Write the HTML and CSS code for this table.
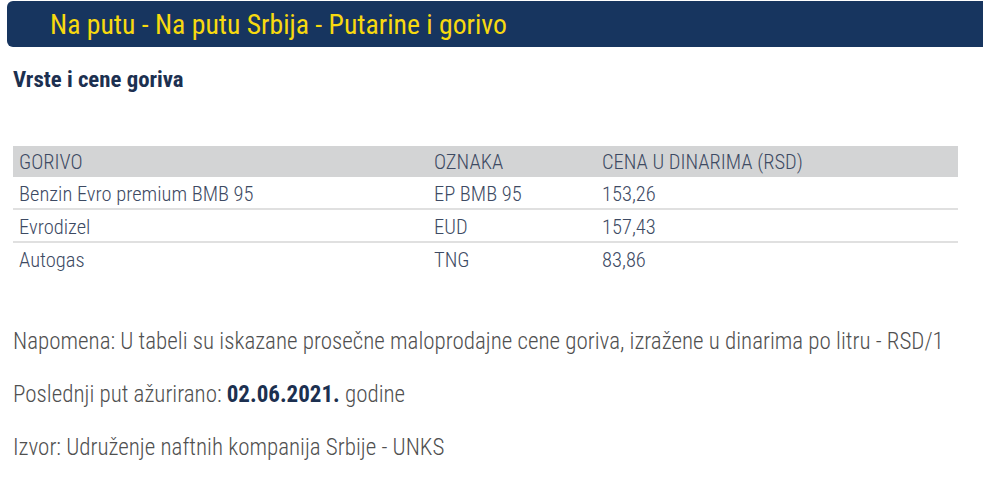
FILE: index.html
```html
<!DOCTYPE html>
<html lang="sr">
<head>
<meta charset="utf-8">
<title>Putarine i gorivo</title>
<link rel="stylesheet" href="styles.css">
</head>
<body>
<header class="banner"><h1 class="banner-title">Na putu - Na putu Srbija - Putarine i gorivo</h1></header>
<main class="content">
  <h2 class="section-title">Vrste i cene goriva</h2>
  <table class="fuel-table">
    <thead>
      <tr><th class="col-fuel">GORIVO</th><th class="col-code">OZNAKA</th><th class="col-price">CENA U DINARIMA (RSD)</th></tr>
    </thead>
    <tbody>
      <tr><td>Benzin Evro premium BMB 95</td><td>EP BMB 95</td><td>153,26</td></tr>
      <tr><td>Evrodizel</td><td>EUD</td><td>157,43</td></tr>
      <tr><td>Autogas</td><td>TNG</td><td>83,86</td></tr>
    </tbody>
  </table>
  <p class="note">Napomena: U tabeli su iskazane prosečne maloprodajne cene goriva, izražene u dinarima po litru - RSD/1</p>
  <p class="note">Poslednji put ažurirano: <strong>02.06.2021.</strong> godine</p>
  <p class="note">Izvor: Udruženje naftnih kompanija Srbije - UNKS</p>
</main>
</body>
</html>
```
FILE: styles.css
```css
html, body { margin: 0; padding: 0; background: #fff; }
body { font-family: "Roboto Condensed", Roboto, "Noto Sans", sans-serif; color: #555; }
.banner {
  margin: 1px 0 0 7px;
  height: 46px;
  background: #17355f;
  border-radius: 6px 0 0 6px;
  display: flex;
  align-items: center;
  padding-left: 43px;
}
.banner-title {
  margin: 0;
  font-weight: 400;
  font-size: 27.7px;
  color: #f7d90f;
  white-space: nowrap;
}
.content { padding: 0 25px 0 13px; }
.section-title {
  margin: 19px 0 0;
  font-size: 22.8px;
  line-height: 28px;
  font-weight: 700;
  color: #1c3050;
}
.fuel-table {
  margin-top: 52px;
  width: 945px;
  border-collapse: collapse;
  font-size: 20.5px;
  font-weight: 300;
  color: #3d4a63;
}
.fuel-table th {
  background: #d3d4d5;
  font-weight: 300;
  text-align: left;
  height: 30px;
  padding: 1px 6px 0;
}
.fuel-table td {
  height: 28px;
  padding: 3px 6px 0;
  border-bottom: 2px solid #e0e0e0;
}
.fuel-table tbody tr:last-child td { border-bottom: none; }
.col-fuel { width: 403px; }
.col-code { width: 156px; }
.note {
  margin: 0;
  font-size: 23px;
  font-weight: 300;
  line-height: 28px;
  color: #505050;
}
.fuel-table + .note { margin-top: 54px; }
.note + .note { margin-top: 25px; }
.note strong { color: #1c3050; font-weight: 700; }
```
